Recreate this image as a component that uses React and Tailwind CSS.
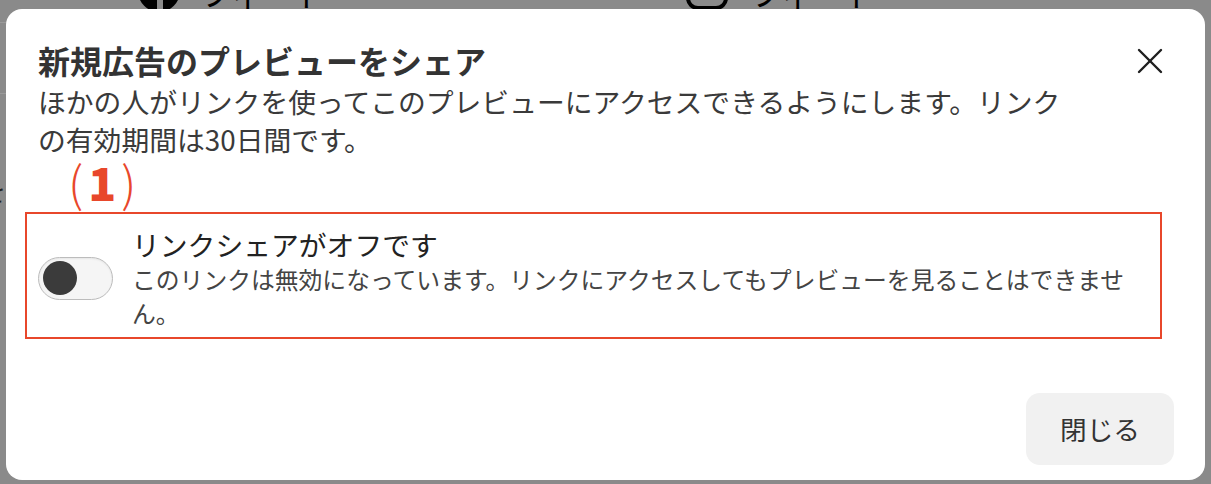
import React from 'react';

const jp = { fontFamily: '"Noto Sans CJK JP", "Noto Sans", sans-serif' };

function CloseIcon() {
  return (
    <svg width="26" height="26" viewBox="0 0 26 26" fill="none" stroke="#1f1f1f" strokeWidth="2.4" strokeLinecap="round">
      <path d="M2 2 L24 24" />
      <path d="M24 2 L2 24" />
    </svg>
  );
}

function Toggle() {
  return (
    <div className="w-[75px] h-[43px] rounded-full border-[1.5px] border-[#bcbcbc] bg-[#f5f5f5] flex items-center pl-[4px] shrink-0 shadow-[inset_0_1px_2px_rgba(0,0,0,0.06)]">
      <div className="w-[34px] h-[34px] rounded-full bg-[#3b3b3b]" />
    </div>
  );
}

export default function App() {
  return (
    <div className="relative w-[1211px] h-[484px] overflow-hidden bg-[#8a8a8a]" style={jp}>
      {/* page behind the overlay */}
      <div className="absolute inset-x-0 top-0 h-[9px] overflow-hidden">
        <div className="absolute left-[138px] top-[-30px] w-[42px] h-[42px] rounded-full bg-black flex justify-center">
          <div className="w-[6px] h-full bg-[#8a8a8a] ml-[2px]" />
        </div>
        <div className="absolute left-[200px] top-[-26px] text-[32px] leading-[36px] text-black">フィード</div>
        <div className="absolute left-[686px] top-[-30px] w-[42px] h-[40px] rounded-[12px] border-[4px] border-black" />
        <div className="absolute left-[750px] top-[-26px] text-[32px] leading-[36px] text-black">フィード</div>
      </div>
      <div className="absolute left-0 top-[22px] w-[6px] h-[1px] bg-[#9a9a9a]" />
      <div className="absolute left-0 top-[93px] w-[6px] h-[1px] bg-[#9a9a9a]" />
      <div className="absolute left-[-20px] top-[176px] text-[26px] leading-[30px] text-[#222]">を</div>

      {/* dialog */}
      <div className="absolute left-[6px] top-[9px] w-[1199px] h-[471px] rounded-[16px] bg-white pl-[32px] pr-[43px] pt-[31px] flex flex-col">
        <div className="flex items-center justify-between">
          <h2 className="text-[32px] leading-[40px] font-bold text-[#333]">新規広告のプレビューをシェア</h2>
          <button className="mt-[2px] -mr-[1px]">
            <CloseIcon />
          </button>
        </div>
        <p className="mt-[2px] w-[1050px] text-[27.8px] leading-[38px] text-[#3a3a3a]">
          ほかの人がリンクを使ってこのプレビューにアクセスできるようにします。リンクの有効期間は30日間です。
        </p>

        {/* annotation */}
        <div className="ml-[30px] h-[46px] flex items-center text-[#e8472b]">
          <span className="text-[48px] leading-[46px] font-light">(</span>
          <span className="text-[46px] leading-[46px] font-black mx-[5px]">1</span>
          <span className="text-[48px] leading-[46px] font-light">)</span>
        </div>

        <div className="mt-[8px] -ml-[13px] border-2 border-[#e8472b] pl-[11px] pr-[6px] pt-[12px] pb-[7px] flex items-center gap-[19px]">
          <Toggle />
          <div className="flex flex-col">
            <div className="text-[27.8px] leading-[36px] text-[#222]">リンクシェアがオフです</div>
            <div className="w-[1020px] text-[23.8px] leading-[34px] text-[#444]">
              このリンクは無効になっています。リンクにアクセスしてもプレビューを見ることはできません。
            </div>
          </div>
        </div>

        <div className="mt-[54px] -mr-[12px] flex justify-end">
          <button className="w-[148px] h-[72px] rounded-[14px] bg-[#f1f1f1] text-[26.7px] text-[#333]">
            閉じる
          </button>
        </div>
      </div>
    </div>
  );
}
